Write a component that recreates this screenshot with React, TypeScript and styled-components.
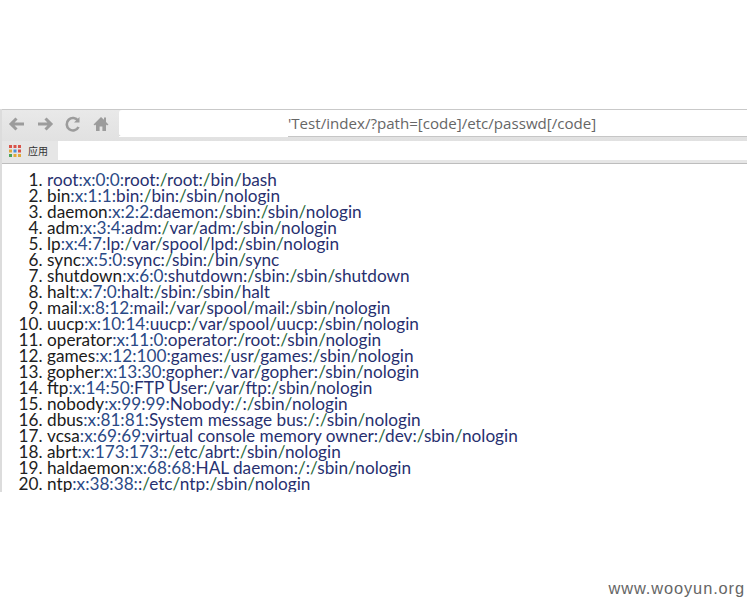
import React from "react";
import styled, { createGlobalStyle } from "styled-components";

const Global = createGlobalStyle`
  html, body { margin: 0; padding: 0; background: #fff; }
  body { width: 747px; height: 598px; overflow: hidden; font-family: "Lato", "Liberation Sans", sans-serif; }
`;

const Page = styled.div`
  width: 747px;
  height: 598px;
  padding-top: 109px;
  box-sizing: border-box;
  display: flex;
  flex-direction: column;
`;

const Browser = styled.div`
  height: 383px;
  overflow: hidden;
  display: flex;
  flex-direction: column;
  border-left: 2px solid #dcdcdc;
`;

const Toolbar = styled.div`
  height: 32px;
  flex: none;
  display: flex;
  align-items: flex-start;
  background: linear-gradient(#e9e9e9, #e1e1e1);
  border-top: 1px solid #c9c9c9;
  box-sizing: border-box;
`;

const Nav = styled.div`
  width: 117px;
  height: 27px;
  flex: none;
  display: flex;
  align-items: center;
  gap: 8px;
  padding-left: 5px;
  box-sizing: border-box;
`;

const IconSlot = styled.svg`
  width: 20px;
  height: 20px;
  flex: none;
  color: #9c9c9c;
`;

const Address = styled.div`
  position: relative;
  flex: 1;
  height: 27px;
  background: #fff;
  border-bottom: 1px solid #c6c6c6;
  border-radius: 3px 0 0 3px;
  box-sizing: border-box;
  padding-left: 169px;
  font: 15.1px/26px "Open Sans", "Liberation Sans", sans-serif;
  color: #666;
  white-space: nowrap;
  &::before {
    content: "";
    position: absolute;
    left: 0;
    bottom: -1px;
    width: 169px;
    height: 1px;
    background: #fff;
  }
`;

const Bookmarks = styled.div`
  height: 23px;
  flex: none;
  display: flex;
  background: #e6e6e6;
  border-bottom: 1px solid #bdbdbd;
  box-sizing: border-box;
`;

const BookmarkTab = styled.div`
  width: 56px;
  height: 19px;
  flex: none;
  display: flex;
  align-items: center;
  gap: 6px;
  padding-left: 6px;
  box-sizing: border-box;
  font: 10px/19px "Noto Sans CJK SC", sans-serif;
  color: #333;
`;

const BookmarkFill = styled.div`
  flex: 1;
  height: 19px;
  background: #fff;
`;

const Lines = styled.ol`
  margin: 0;
  padding: 8px 0 0 45px;
  list-style: decimal;
  font: 17.2px/16px "Lato", "Liberation Sans", sans-serif;
  color: #111;
  white-space: nowrap;
`;

const Line = styled.li`
  height: 16px;
  &::marker { color: #222; }
`;

type Kind = "name" | "lead" | "text" | "slash" | "num";

const palette: Record<Kind, string> = {
  name: "#1a1a1a",
  lead: "#27306f",
  text: "#27306f",
  slash: "#2a6b3a",
  num: "#2b4a86",
};

const Part = styled.span<{ $kind: Kind }>`
  color: ${(p) => palette[p.$kind]};
`;

const Watermark = styled.div`
  margin-top: auto;
  padding: 0 2px 1px 0;
  text-align: right;
  font: 16.4px/17px "Liberation Sans", sans-serif;
  letter-spacing: 0.9px;
  color: #666;
`;

const passwd = [
  "root:x:0:0:root:/root:/bin/bash",
  "bin:x:1:1:bin:/bin:/sbin/nologin",
  "daemon:x:2:2:daemon:/sbin:/sbin/nologin",
  "adm:x:3:4:adm:/var/adm:/sbin/nologin",
  "lp:x:4:7:lp:/var/spool/lpd:/sbin/nologin",
  "sync:x:5:0:sync:/sbin:/bin/sync",
  "shutdown:x:6:0:shutdown:/sbin:/sbin/shutdown",
  "halt:x:7:0:halt:/sbin:/sbin/halt",
  "mail:x:8:12:mail:/var/spool/mail:/sbin/nologin",
  "uucp:x:10:14:uucp:/var/spool/uucp:/sbin/nologin",
  "operator:x:11:0:operator:/root:/sbin/nologin",
  "games:x:12:100:games:/usr/games:/sbin/nologin",
  "gopher:x:13:30:gopher:/var/gopher:/sbin/nologin",
  "ftp:x:14:50:FTP User:/var/ftp:/sbin/nologin",
  "nobody:x:99:99:Nobody:/:/sbin/nologin",
  "dbus:x:81:81:System message bus:/:/sbin/nologin",
  "vcsa:x:69:69:virtual console memory owner:/dev:/sbin/nologin",
  "abrt:x:173:173::/etc/abrt:/sbin/nologin",
  "haldaemon:x:68:68:HAL daemon:/:/sbin/nologin",
  "ntp:x:38:38::/etc/ntp:/sbin/nologin",
];

function Entry({ text, index }: { text: string; index: number }) {
  const first = text.indexOf(":");
  const rest = text.slice(first).split(/(\/|:x:\d+:\d+:)/).filter(Boolean);
  return (
    <Line>
      <Part $kind={index === 0 ? "lead" : "name"}>{text.slice(0, first)}</Part>
      {rest.map((s, i) => (
        <Part key={i} $kind={s === "/" ? "slash" : s.startsWith(":x:") ? "num" : "text"}>
          {s}
        </Part>
      ))}
    </Line>
  );
}

const apps = ["#d9534a", "#d9534a", "#d9534a", "#e0a93b", "#4a8fd8", "#d9534a", "#4aa35a", "#e0a93b", "#e0a93b"];

export default function App() {
  return (
    <Page>
      <Global />
      <Browser>
        <Toolbar>
          <Nav>
            <IconSlot viewBox="0 0 20 20" fill="none" stroke="currentColor" strokeWidth="3">
              <path d="M17 10H4M9.5 4.5 4 10l5.5 5.5" />
            </IconSlot>
            <IconSlot viewBox="0 0 20 20" fill="none" stroke="currentColor" strokeWidth="3">
              <path d="M3 10h13M10.5 4.5 16 10l-5.5 5.5" />
            </IconSlot>
            <IconSlot viewBox="0 0 20 20" fill="none" stroke="currentColor" strokeWidth="2.6">
              <path d="M15.5 13a6.2 6.2 0 1 1-.4-6.2" />
              <path d="M16.5 3v5.5H11" fill="currentColor" stroke="none" />
            </IconSlot>
            <IconSlot viewBox="0 0 20 20" fill="currentColor">
              <path d="M10 3 2.5 10.5 4 11.5l1-.9V17h3.6v-4.5h2.8V17H15v-6.4l1 .9 1.5-1-2.5-2.5V3.5h-2v2.2Z" />
            </IconSlot>
          </Nav>
          <Address>'Test/index/?path=[code]/etc/passwd[/code]</Address>
        </Toolbar>
        <Bookmarks>
          <BookmarkTab>
            <svg width="14" height="14" viewBox="0 0 14 14">
              {apps.map((c, i) => (
                <rect key={i} x={1 + (i % 3) * 4.5} y={1 + Math.floor(i / 3) * 4.5} width="3" height="3" fill={c} />
              ))}
            </svg>
            应用
          </BookmarkTab>
          <BookmarkFill />
        </Bookmarks>
        <Lines>
          {passwd.map((l, i) => (
            <Entry key={l} text={l} index={i} />
          ))}
        </Lines>
      </Browser>
      <Watermark>www.wooyun.org</Watermark>
    </Page>
  );
}
